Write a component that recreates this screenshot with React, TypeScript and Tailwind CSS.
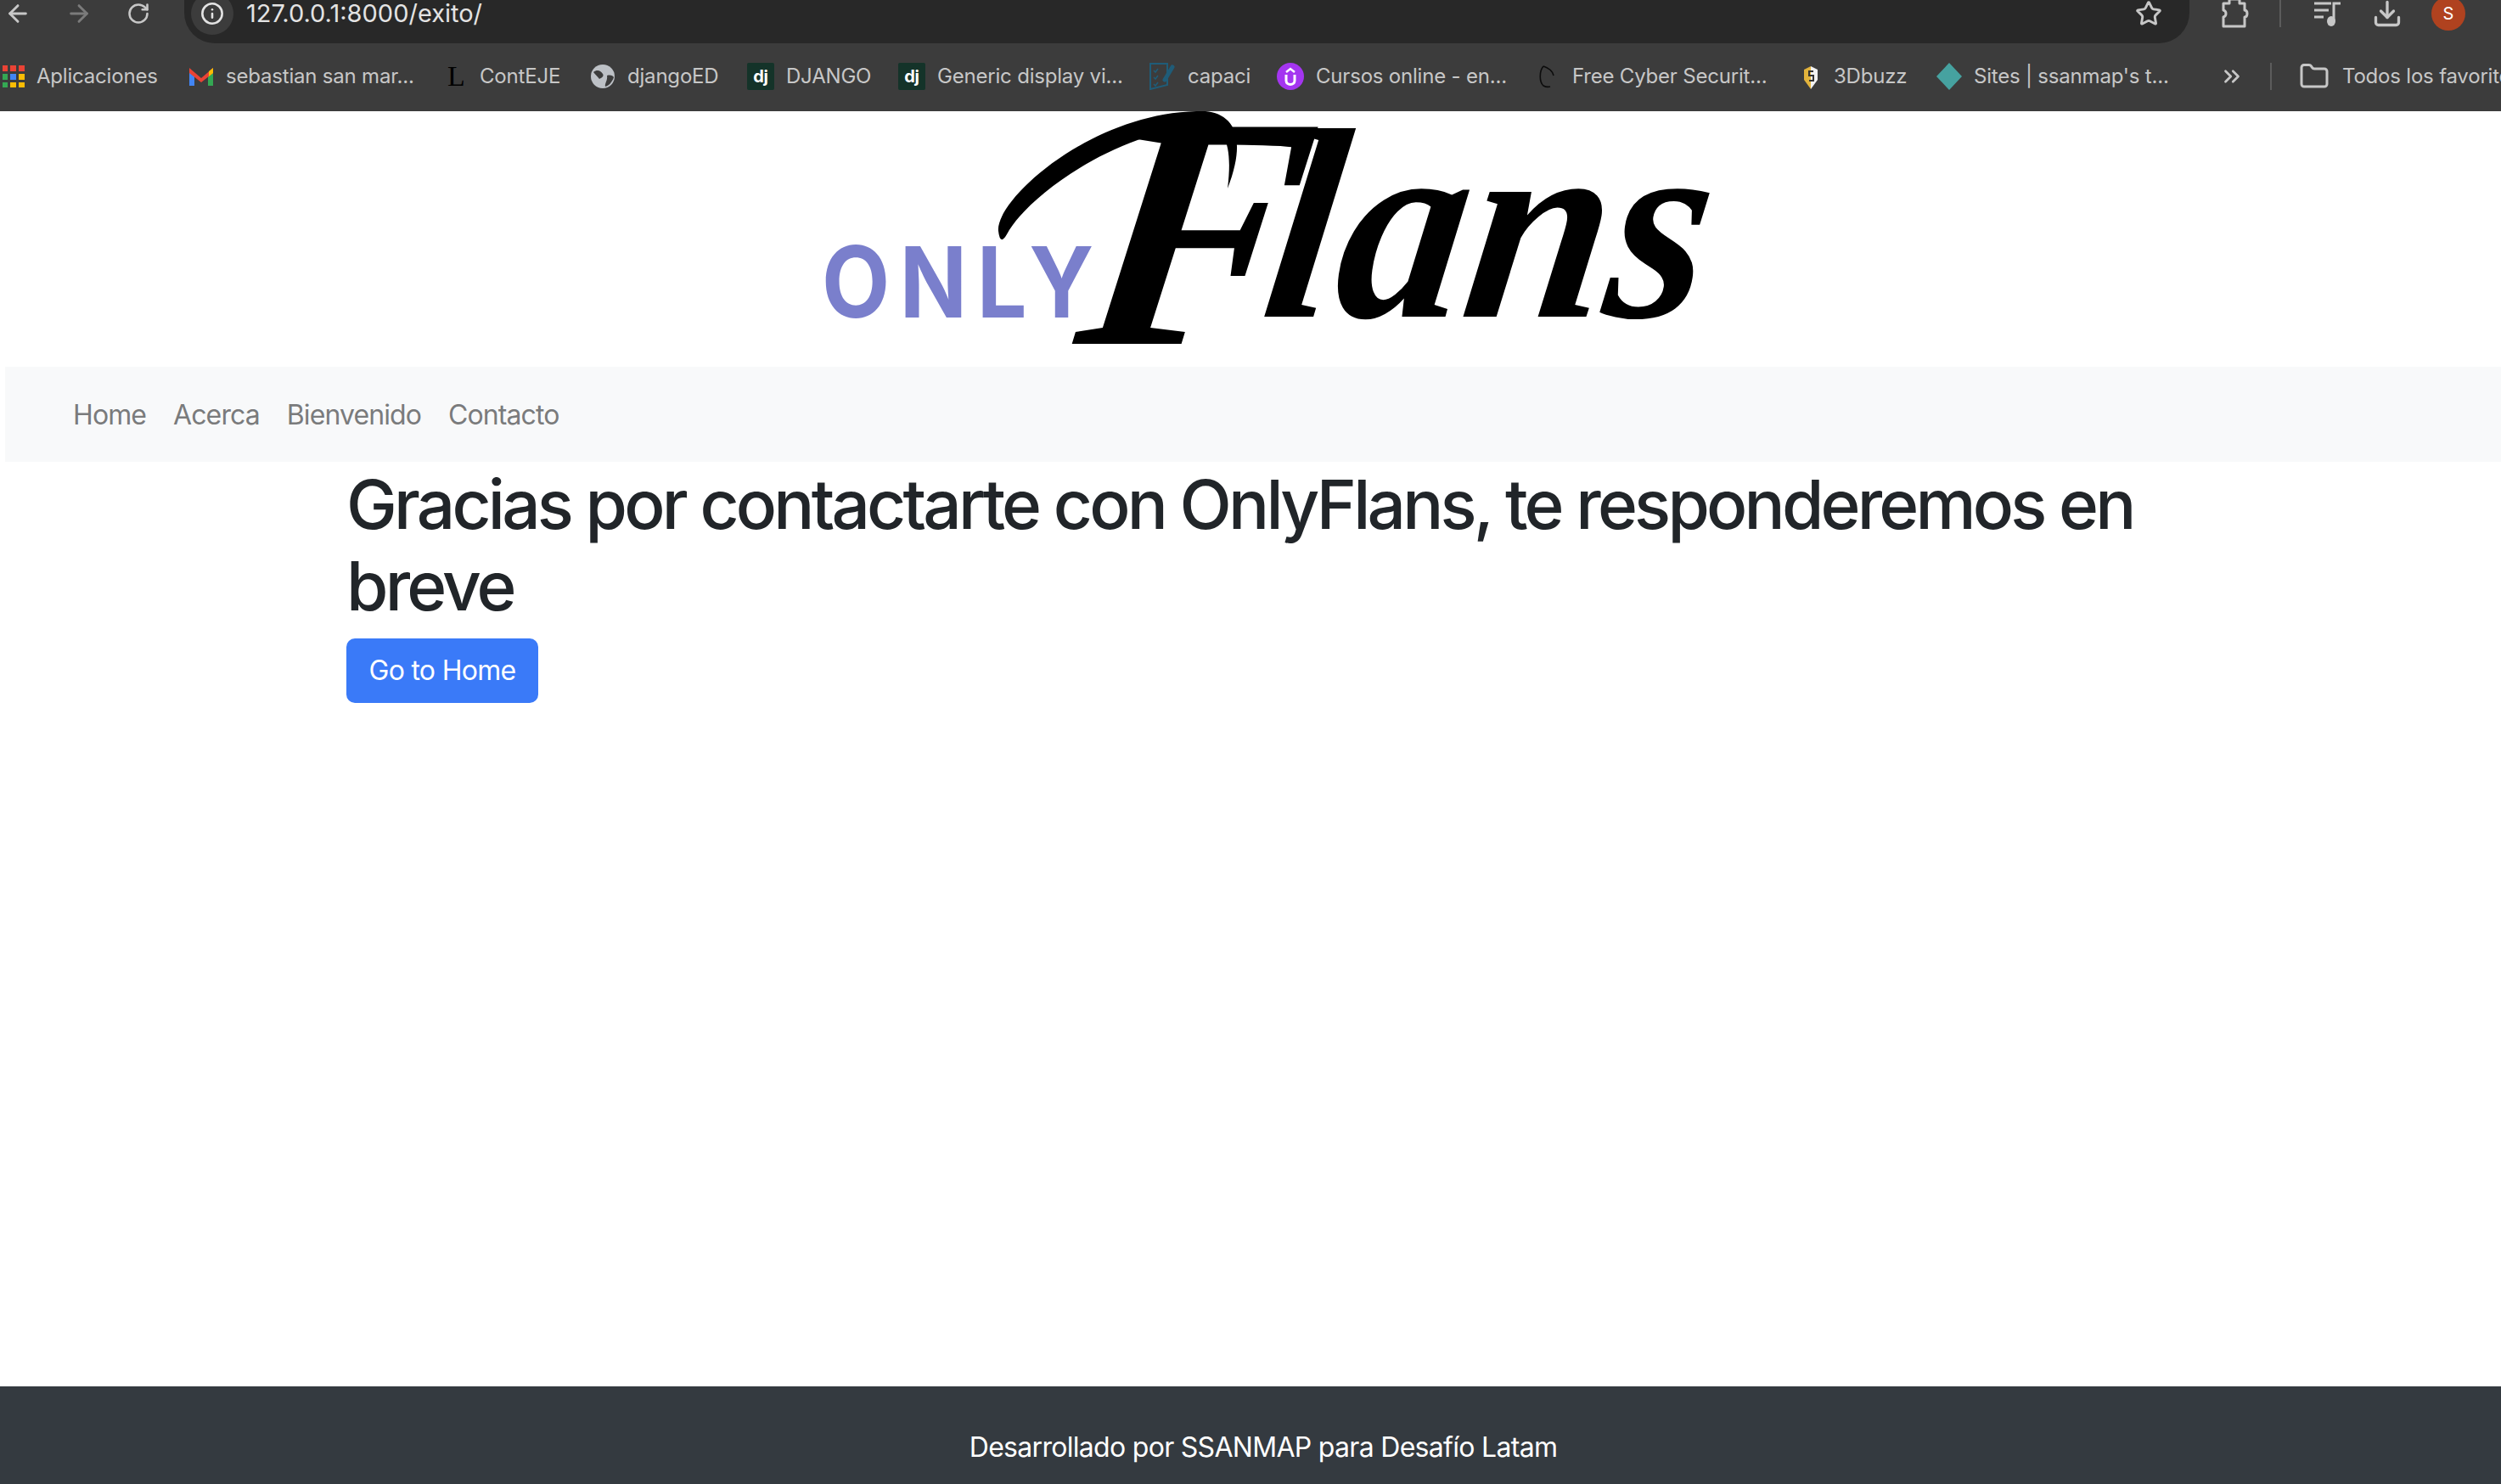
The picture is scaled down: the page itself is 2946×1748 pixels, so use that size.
import type { ReactNode } from 'react';
import { ArrowLeft, ArrowRight, ChevronsRight, Download, Folder, Info, RotateCw, Star } from 'lucide-react';

function AppsIcon() {
  const colors = ['#ea4335', '#ea4335', '#ea4335', '#34a853', '#4285f4', '#fbbc04', '#34a853', '#fbbc04', '#fbbc04'];
  return (
    <svg width="26" height="26" viewBox="0 0 26 26">
      {colors.map((c, i) => (
        <rect key={i} x={(i % 3) * 10 - 1} y={Math.floor(i / 3) * 10} width="7" height="7" fill={c} />
      ))}
    </svg>
  );
}

function GmailIcon() {
  return (
    <svg width="30" height="24" viewBox="0 0 30 24">
      <path d="M1 4 V23 H7 V9 Z" fill="#4285f4" />
      <path d="M29 4 V23 H23 V9 Z" fill="#34a853" />
      <path d="M1 2 L15 14 L29 2 V8 L15 19 L1 8 Z" fill="#ea4335" />
      <path d="M24 6 L29 2 V8 L24 12 Z" fill="#fbbc04" />
    </svg>
  );
}

function GlobeIcon() {
  return (
    <svg width="30" height="30" viewBox="0 0 30 30">
      <circle cx="15" cy="15" r="14" fill="#bdc1c6" />
      <path d="M4 10 C9 6 13 9 15 12 C17 15 13 17 11 18 C9 15 6 13 4 10 Z" fill="#3c3c3c" />
      <path d="M20 14 C24 13 27 14 28 16 C26 22 22 26 18 27 C17 23 21 20 20 14 Z" fill="#3c3c3c" />
    </svg>
  );
}

function DjIcon() {
  return (
    <span className="flex h-[32px] w-[32px] items-center justify-center rounded-[2px] bg-[#143329] text-[20px] font-bold leading-none text-white">
      dj
    </span>
  );
}

function CapaciIcon() {
  return (
    <svg width="32" height="32" viewBox="0 0 32 32" fill="none" stroke="#1f5c78" strokeWidth="2">
      <path d="M2 1 H22 V26 L2 31 Z" />
      <path d="M6 9 L8 11 L11 7 M6 17 L8 19 L11 15 M6 25 L8 27 L11 23" strokeWidth="1.5" />
      <path d="M19 20 L28 5" strokeWidth="5" strokeLinecap="round" />
    </svg>
  );
}

function UdemyIcon() {
  return (
    <svg width="32" height="32" viewBox="0 0 32 32">
      <circle cx="16" cy="16" r="16" fill="#a435f0" />
      <path d="M11 11 L16 7 L21 11" fill="none" stroke="white" strokeWidth="2.5" />
      <path d="M11 14 V21 C11 27 21 27 21 21 V14" fill="none" stroke="white" strokeWidth="3" />
    </svg>
  );
}

function CyberIcon() {
  return (
    <svg width="26" height="28" viewBox="0 0 26 28" fill="none" stroke="#0c0c0c" strokeWidth="1.6">
      <path d="M6 2 C1 8 1 20 6 25 C8 26 11 27 14 26" />
      <path d="M6 2 C12 4 17 8 18 13" />
    </svg>
  );
}

function BuzzIcon() {
  return (
    <svg width="26" height="32" viewBox="-4 0 26 32">
      <path d="M9 0 V4 L1 8 V20 L9 31 Z" fill="#e2b33c" />
      <path d="M9 4 L17 8 V20 L9 31 Z" fill="#f2f2f2" />
      <path d="M12 10 H7 V15 H12 V21 H7" fill="none" stroke="#333" strokeWidth="2" />
    </svg>
  );
}

function DiamondIcon() {
  return (
    <svg width="30" height="32" viewBox="0 0 30 32">
      <path d="M15 0 L30 16 L15 32 L0 16 Z" fill="#46a2a0" />
    </svg>
  );
}

function ExtensionIcon() {
  return (
    <svg width="34" height="36" viewBox="0 0 34 36" fill="none" stroke="#c7c7c7" strokeWidth="3">
      <path d="M4 6 H11 V1 H23 V6 H29 V14 C33 14 33 22 29 22 V33 H4 V22 C8 21 8 15 4 14 Z" strokeLinejoin="round" />
    </svg>
  );
}

function MediaIcon() {
  return (
    <svg width="34" height="34" viewBox="0 0 34 34" fill="none" stroke="#c7c7c7" strokeWidth="3">
      <path d="M1 5 H21 M1 13 H18 M1 21 H12" />
      <path d="M24 26 V5 H32" />
      <ellipse cx="21" cy="26" rx="5" ry="6" fill="#c7c7c7" stroke="none" />
    </svg>
  );
}

type Bookmark = { icon: ReactNode; label: string; width: string };

const bookmarks: Bookmark[] = [
  { icon: <AppsIcon />, label: 'Aplicaciones', width: 'w-[146px]' },
  { icon: <GmailIcon />, label: 'sebastian san mar...', width: 'w-[228px]' },
  { icon: <span className="w-[24px] font-['Liberation_Serif',serif] text-[34px] leading-none text-black">L</span>, label: 'ContEJE', width: 'w-[97px]' },
  { icon: <GlobeIcon />, label: 'djangoED', width: 'w-[108px]' },
  { icon: <DjIcon />, label: 'DJANGO', width: 'w-[99px]' },
  { icon: <DjIcon />, label: 'Generic display vi...', width: 'w-[216px]' },
  { icon: <CapaciIcon />, label: 'capaci', width: 'w-[72px]' },
  { icon: <UdemyIcon />, label: 'Cursos online - en...', width: 'w-[229px]' },
  { icon: <CyberIcon />, label: 'Free Cyber Securit...', width: 'w-[235px]' },
  { icon: <BuzzIcon />, label: '3Dbuzz', width: 'w-[88px]' },
  { icon: <DiamondIcon />, label: "Sites | ssanmap's t...", width: 'w-[220px]' },
];

function BrowserChrome() {
  return (
    <header className="h-[131px] shrink-0 overflow-hidden bg-[#3c3c3c] font-['Inter',sans-serif] text-[#c7c7c7]">
      <div className="flex h-[51px] items-start">
        <div className="flex h-[32px] w-[217px] items-center gap-[40px] pl-[5px]">
          <ArrowLeft size={32} strokeWidth={2.2} className="text-[#c7c7c7]" />
          <ArrowRight size={32} strokeWidth={2.2} className="text-[#7b7b7b]" />
          <RotateCw size={28} strokeWidth={2.2} className="text-[#c7c7c7]" />
        </div>
        <div className="flex h-[51px] w-[2362px] items-start rounded-b-[36px] bg-[#282828] pl-[8px] pr-[32px]">
          <span className="-mt-[9px] flex h-[50px] w-[50px] items-center justify-center rounded-full bg-[#3c3c3c]">
            <Info size={28} className="mt-[-1px] text-[#e3e3e3]" strokeWidth={2.2} />
          </span>
          <span className="ml-[15px] h-[32px] text-[29px] leading-[32px] text-[#e3e3e3]">127.0.0.1:8000/exito/</span>
          <Star size={32} strokeWidth={2.2} className="ml-auto text-[#c7c7c7]" />
        </div>
        <div className="flex h-[32px] items-center">
          <span className="ml-[36px]">
            <ExtensionIcon />
          </span>
          <span className="ml-[36px] h-[32px] w-[2px] bg-[#5c5c5c]" />
          <span className="ml-[38px]">
            <MediaIcon />
          </span>
          <Download size={36} strokeWidth={2.2} className="ml-[35px]" />
          <span className="ml-[34px] flex h-[40px] w-[40px] items-center justify-center rounded-full bg-[#b0421f] text-[20px] text-white">S</span>
        </div>
      </div>
      <nav className="flex h-[80px] items-center pb-[2px] text-[24px] tracking-[-0.2px]">
        <div className="flex w-[2560px] shrink-0 items-center gap-[33px] pl-[3px]">
          {bookmarks.map((b) => (
            <span key={b.label} className="flex shrink-0 items-center gap-[14px]">
              {b.icon}
              <span className={`${b.width} whitespace-nowrap`}>{b.label}</span>
            </span>
          ))}
        </div>
        <ChevronsRight size={30} strokeWidth={2.2} className="ml-[54px] shrink-0" />
        <span className="ml-[30px] h-[32px] w-[2px] shrink-0 bg-[#5c5c5c]" />
        <Folder size={36} strokeWidth={2} className="ml-[32px] shrink-0" />
        <span className="ml-[15px] whitespace-nowrap">Todos los favoritos</span>
      </nav>
    </header>
  );
}

function Logo() {
  return (
    <div className="h-[301px] shrink-0 pl-[960px]">
      <svg width="1060" height="301" viewBox="960 131 1060 301">
        <text x="968" y="374" fontFamily="Inter, sans-serif" fontWeight="700" fontSize="116" letterSpacing="13" fill="#7a7fcc" textLength="332" lengthAdjust="spacingAndGlyphs">
          ONLY
        </text>
        <path d="M1176 272 C1172 235 1290 128 1420 131 C1452 134 1470 160 1446 222 C1452 172 1444 148 1416 150 C1320 152 1210 230 1186 276 Q1178 290 1176 272 Z" fill="#000" />
        <text fontFamily="'Liberation Serif', serif" fontStyle="italic" fontWeight="700" fill="#000" transform="skewX(-8)">
          <tspan x="1320" y="405" fontSize="390">F</tspan>
          <tspan x="1535" y="373" fontSize="320" textLength="520" lengthAdjust="spacingAndGlyphs">lans</tspan>
        </text>
      </svg>
    </div>
  );
}

export default function App() {
  return (
    <div className="flex h-[1748px] w-[2946px] flex-col overflow-hidden bg-white font-['Inter',sans-serif]">
      <BrowserChrome />
      <Logo />
      <nav className="ml-[6px] flex h-[112px] shrink-0 items-center gap-[32px] bg-[#f8f9fa] pl-[80px] pt-[2px] text-[32px] tracking-[-0.9px] text-[#7a7b7c]">
        <a>Home</a>
        <a>Acerca</a>
        <a>Bienvenido</a>
        <a>Contacto</a>
      </nav>
      <main className="ml-[408px] w-[2130px] flex-1 pt-[2px]">
        <h1 className="mb-[14px] text-[80px] font-medium leading-[96px] tracking-[-3.8px] text-[#212529]">
          Gracias por contactarte con OnlyFlans, te responderemos en breve
        </h1>
        <button type="button" className="h-[76px] w-[226px] rounded-[10px] bg-[#3a7af8] text-[32px] tracking-[-0.7px] text-white">
          Go to Home
        </button>
      </main>
      <footer className="flex h-[115px] shrink-0 items-center justify-center bg-[#343a40] pl-[30px] pt-[28px] text-[32px] tracking-[-0.7px] text-white">
        Desarrollado por SSANMAP para Desafío Latam
      </footer>
    </div>
  );
}
